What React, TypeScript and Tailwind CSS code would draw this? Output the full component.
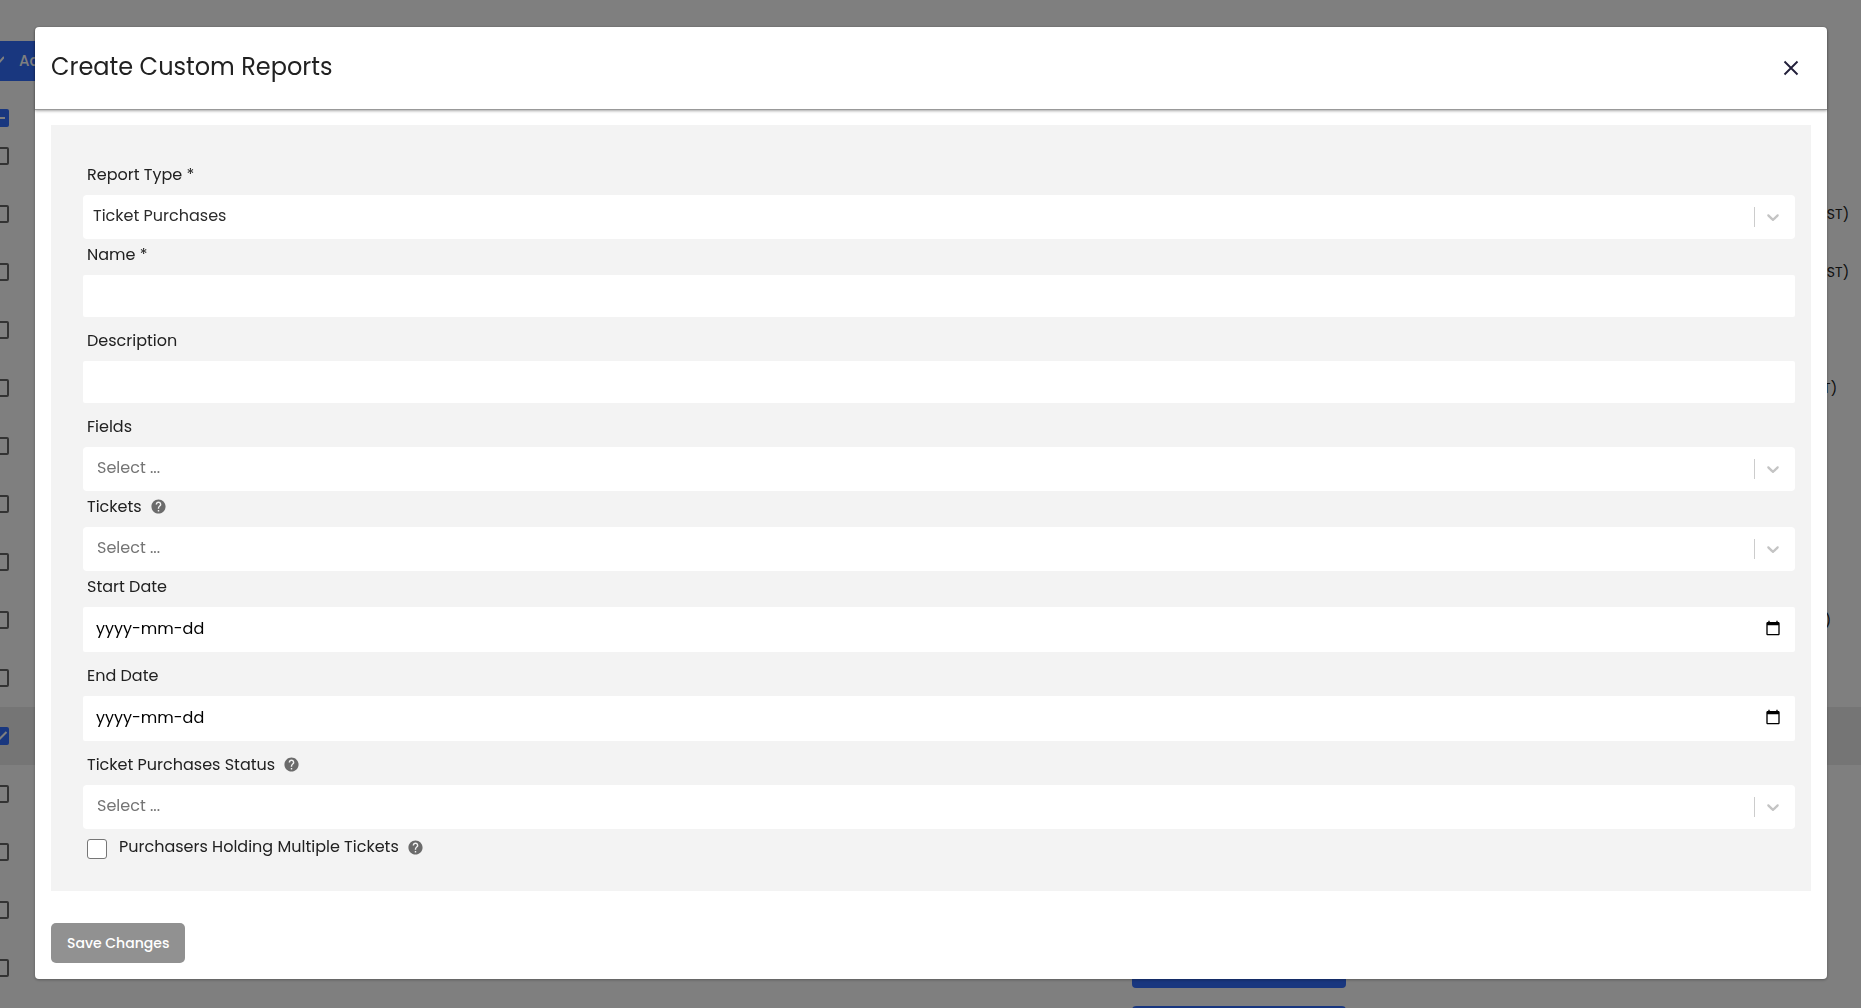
import type { ReactNode } from 'react';
import { MdHelp } from 'react-icons/md';

const rows = [
    { id: 1 },
    { id: 2, zone: 'ST)', pad: 'pr-3' },
    { id: 3, zone: 'ST)', pad: 'pr-3' },
    { id: 4 },
    { id: 5, zone: 'T)', pad: 'pr-6' },
    { id: 6 },
    { id: 7 },
    { id: 8 },
    { id: 9, zone: ')', pad: 'pr-[30px]' },
    { id: 10 },
    { id: 11, selected: true },
    { id: 12 },
    { id: 13 },
    { id: 14 },
    { id: 15, action: true },
    { id: 16, action: true },
];

function CheckMark() {
    return (
        <svg viewBox="0 0 18 18" className="w-[18px] h-[18px]" fill="none" stroke="white" strokeWidth="2">
            <path d="M3 9.5l4 4 8.5-8.5" />
        </svg>
    );
}

function ReportsPage() {
    return (
        <div className="h-screen overflow-hidden bg-white pt-[41px]" aria-hidden="true">
            <div className="flex items-center w-48 h-10 bg-[#326eff] text-white text-[15px] font-medium">
                <svg viewBox="0 0 12 12" className="w-3 h-3 -ml-2 mr-[15px]" fill="none" stroke="currentColor" strokeWidth="2">
                    <path d="M1 6l4 4 7-8" />
                </svg>
                Ac
            </div>

            {/* Header checkbox */}
            <div className="mt-7 -ml-[9px] w-[18px] h-[18px] rounded-xs bg-[#326eff] flex items-center">
                <span className="mx-auto w-[10px] h-[2px] bg-white"></span>
            </div>

            <div>
                {rows.map((row) => (
                    <div
                        key={row.id}
                        className={`flex items-center justify-between h-[58px] ${row.selected ? 'bg-[#ebebeb]' : ''}`}
                    >
                        {row.selected ? (
                            <span className="-ml-[9px] w-[18px] h-[18px] rounded-xs bg-[#326eff]">
                                <CheckMark />
                            </span>
                        ) : (
                            <span className="-ml-[9px] w-[18px] h-[18px] rounded-xs border-2 border-[#666666]"></span>
                        )}
                        {row.action && <span className="mr-[515px] w-[214px] h-10 rounded bg-[#326eff]"></span>}
                        {row.zone && <span className={`text-sm text-[#222222] ${row.pad}`}>{row.zone}</span>}
                    </div>
                ))}
            </div>
        </div>
    );
}

function Label({ htmlFor, help, children }: { htmlFor: string; help?: boolean; children: ReactNode }) {
    return (
        <div className="flex items-center h-9 pl-1 pb-[5px]">
            <label htmlFor={htmlFor}>{children}</label>
            {help && <MdHelp className="ml-2 w-[17px] h-[17px] text-[#6b6b6b]" />}
        </div>
    );
}

function SelectField({ id, label, value, help }: { id: string; label: string; value?: string; help?: boolean }) {
    return (
        <div>
            <Label htmlFor={id} help={help}>{label}</Label>
            <div className="flex items-center h-11 pr-3 bg-white rounded">
                <select
                    id={id}
                    className={`flex-1 h-full pb-0.5 appearance-none outline-none bg-transparent ${value ? 'pl-[10px] text-[#2b2b2b]' : 'pl-[14px] text-[#757575]'}`}
                >
                    <option>{value ?? 'Select ...'}</option>
                </select>
                <span className="w-px h-5 bg-[#cccccc]"></span>
                <svg viewBox="0 0 20 20" className="ml-2 w-5 h-5 fill-[#c4c4c4]">
                    <path d="M4.516 7.548c0.436-0.446 1.043-0.481 1.576 0l3.908 3.747 3.908-3.747c0.533-0.481 1.141-0.446 1.574 0 0.436 0.445 0.408 1.197 0 1.615-0.406 0.418-4.695 4.502-4.695 4.502-0.217 0.223-0.502 0.335-0.787 0.335s-0.57-0.112-0.789-0.335c0 0-4.287-4.084-4.695-4.502s-0.436-1.17 0-1.615z" />
                </svg>
            </div>
        </div>
    );
}

function TextField({ id, label }: { id: string; label: string }) {
    return (
        <div className="mb-2">
            <Label htmlFor={id}>{label}</Label>
            <input id={id} type="text" className="block w-full h-[42px] px-3 bg-white rounded-xs outline-none" />
        </div>
    );
}

function DateField({ id, label }: { id: string; label: string }) {
    return (
        <div className="mb-2">
            <Label htmlFor={id}>{label}</Label>
            <div className="flex items-center h-[45px] pr-[14px] pb-[3px] bg-white rounded-xs">
                <input
                    id={id}
                    type="text"
                    placeholder="yyyy-mm-dd"
                    className="flex-1 h-full pl-[13px] bg-transparent outline-none text-black placeholder:text-black"
                />
                <button type="button" aria-label={label}>
                    <svg viewBox="0 0 24 24" className="w-4 h-4 fill-black">
                        <path d="M20 3h-1V1h-2v2H7V1H5v2H4c-1.1 0-2 .9-2 2v16c0 1.1.9 2 2 2h16c1.1 0 2-.9 2-2V5c0-1.1-.9-2-2-2zm0 18H4V8h16v13z" />
                    </svg>
                </button>
            </div>
        </div>
    );
}

export default function App() {
    return (
        <div className="font-['Poppins','Inter',sans-serif] text-base text-[#212121]">
            <ReportsPage />

            {/* Modal */}
            <div className="fixed inset-0 bg-black/50 pt-[27px] pl-[35px] pr-[34px]">
                <div role="dialog" aria-labelledby="dialog-title" className="bg-white rounded-[4px] shadow-[0_1px_3px_rgba(0,0,0,0.3)]">
                    <header className="flex items-center justify-between h-[83px] pl-4 pr-7 rounded-t-[4px] border-b border-[#999999] shadow-[0_1px_3px_rgba(0,0,0,0.35)]">
                        <h1 id="dialog-title" className="text-2xl pb-0.5">Create Custom Reports</h1>
                        <button type="button" aria-label="Close">
                            <svg viewBox="0 0 16 16" className="w-4 h-4" fill="none" stroke="#221f3a" strokeWidth="1.9">
                                <path d="M1.5 1.5l13 13M14.5 1.5l-13 13" />
                            </svg>
                        </button>
                    </header>

                    <form className="px-4 pb-4 pt-[15px]">
                        <div className="pt-[34px] pb-8 pl-8 pr-4 bg-[#f3f3f3]">
                            <SelectField id="report-type" label="Report Type *" value="Ticket Purchases" />
                            <TextField id="name" label="Name *" />
                            <TextField id="description" label="Description" />
                            <SelectField id="fields" label="Fields" />
                            <SelectField id="tickets" label="Tickets" help />
                            <DateField id="start-date" label="Start Date" />
                            <DateField id="end-date" label="End Date" />
                            <SelectField id="status" label="Ticket Purchases Status" help />

                            <div className="flex items-start pt-[10px] pl-1">
                                <input
                                    id="multiple"
                                    type="checkbox"
                                    className="w-5 h-5 appearance-none bg-white border border-[#767676] rounded-[3px] checked:bg-[#326eff]"
                                />
                                <div className="flex items-center h-4 ml-3">
                                    <label htmlFor="multiple">Purchasers Holding Multiple Tickets</label>
                                    <MdHelp className="ml-2 w-[17px] h-[17px] text-[#6b6b6b]" />
                                </div>
                            </div>
                        </div>

                        <button type="button" className="mt-8 h-10 px-4 rounded-[5px] bg-[#919191] text-white text-sm font-medium">
                            Save Changes
                        </button>
                    </form>
                </div>
            </div>
        </div>
    );
}
